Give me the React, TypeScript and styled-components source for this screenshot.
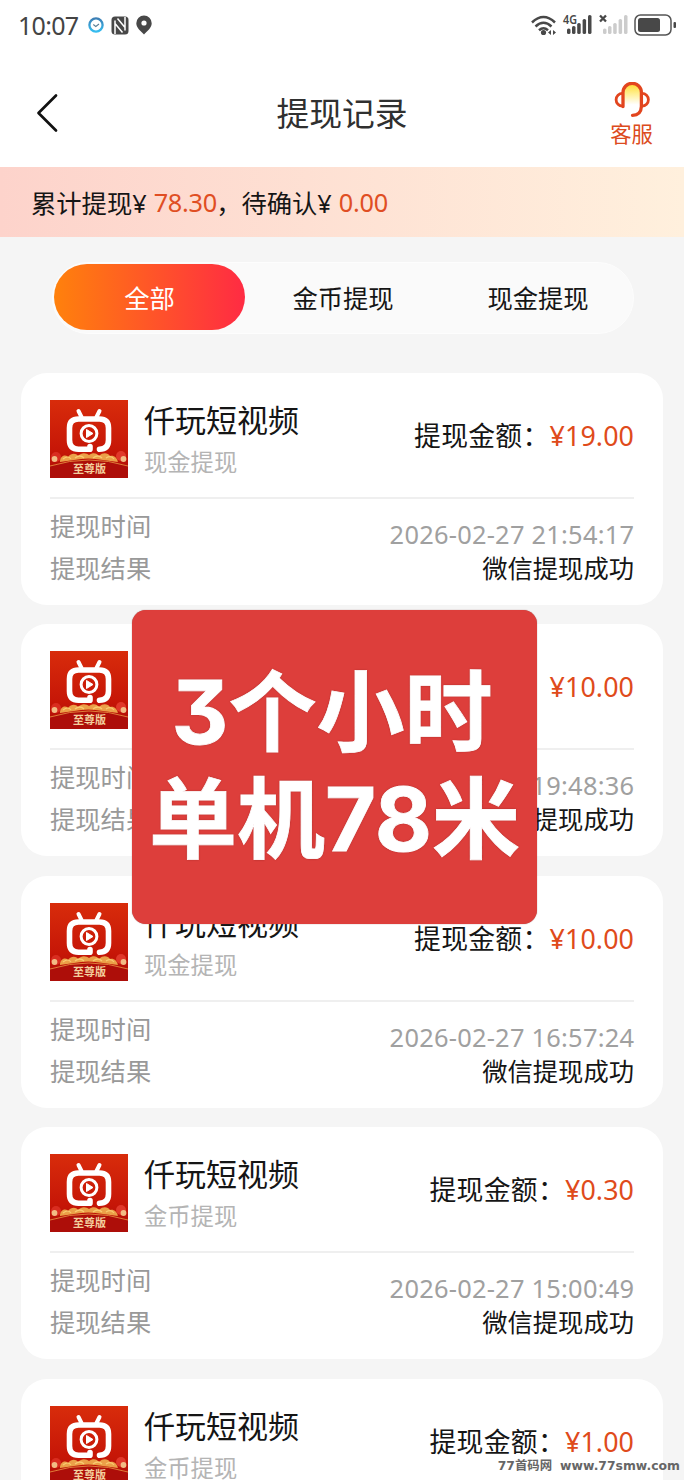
import React from 'react';
import styled, { createGlobalStyle } from 'styled-components';

const Global = createGlobalStyle`
  * { box-sizing: border-box; }
  html, body { margin: 0; padding: 0; background: #f5f5f5; overflow: hidden; }
  body { font-family: 'Noto Sans', 'Noto Sans CJK SC', sans-serif; color: #151515; }
`;

const Screen = styled.div`
  position: relative;
  width: 684px;
  height: 1480px;
  overflow: hidden;
  background: #f5f5f5;
  display: flex;
  flex-direction: column;
`;

const StatusBar = styled.div`
  flex: none;
  height: 50px;
  padding: 0 8px 0 18px;
  background: #fff;
  display: flex;
  align-items: center;
  justify-content: space-between;
`;

const StatusGroup = styled.div<{ $gap: number }>`
  display: flex;
  align-items: center;
  gap: ${p => p.$gap}px;
  svg { display: block; }
`;

const Clock = styled.span`
  font-size: 25px;
  line-height: 50px;
  width: 63px;
  letter-spacing: -0.7px;
  color: #444;
  white-space: nowrap;
`;

const Header = styled.header`
  flex: none;
  height: 117px;
  padding: 0 31px;
  background: #fff;
  display: grid;
  grid-template-columns: 90px 1fr 90px;
  align-items: center;
`;

const BackButton = styled.button`
  border: 0;
  padding: 0;
  margin: 9px 0 0 4px;
  background: none;
  display: flex;
`;

const Title = styled.h1`
  margin: 10px 0 0;
  font-size: 32.8px;
  line-height: 40px;
  font-weight: 400;
  text-align: center;
  color: #303030;
`;

const Support = styled.button`
  border: 0;
  padding: 0;
  margin-top: 13px;
  background: none;
  justify-self: end;
  display: flex;
  flex-direction: column;
  align-items: center;
  font: inherit;
  font-size: 21.4px;
  line-height: 29px;
  color: #dc4b20;
`;

const Summary = styled.div`
  flex: none;
  height: 70px;
  padding-left: 31px;
  background: linear-gradient(90deg, #fdd3cb, #fff0dd);
  display: flex;
  align-items: center;
  font-size: 25.3px;
  white-space: pre;
`;

const SummaryValue = styled.span<{ $width: number }>`
  width: ${p => p.$width}px;
  margin-left: 7px;
  letter-spacing: -0.3px;
  color: #e04e23;
`;

const Tabs = styled.nav`
  flex: none;
  width: 582px;
  height: 72px;
  margin: 24.5px 0 39.5px 52px;
  padding: 1px;
  border: 1px solid #fdfdfd;
  border-radius: 36px;
  background: #fafafa;
  display: grid;
  grid-template-columns: 191px 194px 194px;
  grid-template-rows: 66px;
  column-gap: 1px;
`;

const Tab = styled.button<{ $active?: boolean }>`
  border: 0;
  padding: 0;
  border-radius: 33px;
  font: inherit;
  font-size: 25.3px;
  color: ${p => (p.$active ? '#fff' : '#151515')};
  background: ${p => (p.$active ? 'linear-gradient(90deg, #ff810c, #ff2b43)' : 'none')};
`;

const List = styled.main`
  display: flex;
  flex-direction: column;
  gap: 19.4px;
  padding: 0 21px;
`;

const Card = styled.article`
  flex: none;
  height: 232px;
  padding: 27px 29px 0;
  border-radius: 26px;
  background: #fff;
`;

const CardTop = styled.div`
  display: flex;
  align-items: center;
  height: 99px;
  padding-bottom: 19px;
  border-bottom: 2px solid #efefef;
  svg { flex: none; display: block; }
`;

const Names = styled.div`
  flex: 1;
  margin: 4px 0 0 16px;
  display: flex;
  flex-direction: column;
`;

const AppName = styled.div`
  font-size: 31px;
  line-height: 42px;
`;

const Kind = styled.div`
  font-size: 23.3px;
  line-height: 42px;
  color: #b4b4b4;
`;

const Amount = styled.div`
  display: flex;
  font-size: 26.8px;
  line-height: 40px;
  margin-top: -6px;
  letter-spacing: 0.3px;
`;

const Price = styled.span`
  color: #df4b1b;
  letter-spacing: 0.1px;
`;

const Details = styled.div`
  display: flex;
  justify-content: space-between;
  font-size: 25.3px;
`;

const Labels = styled.div`
  padding-top: 6px;
  line-height: 42px;
  color: #999;
`;

const Values = styled.div`
  padding-top: 18px;
  line-height: 34px;
  text-align: right;
`;

const Time = styled.div`
  color: #a0a0a0;
  font-size: 25.4px;
  letter-spacing: 0.25px;
  margin-right: -0.25px;
`;

const Banner = styled.div`
  position: absolute;
  left: 132px;
  top: 610px;
  width: 405px;
  height: 313.5px;
  padding-top: 49px;
  border-radius: 14px;
  background: #dd3e3b;
  box-shadow: 0 0 1px #8d5553;
  color: #fff;
  font-family: Inter, 'Noto Sans CJK SC', sans-serif;
  font-feature-settings: 'cv09' 1;
  font-size: 88px;
  font-weight: 700;
  line-height: 107px;
  text-align: center;
  white-space: nowrap;
  text-shadow: 0 0 2px rgba(90, 20, 20, 0.6);
  -webkit-text-stroke: 0.8px #fff;
`;

const BannerLine = styled.div<{ $inset?: number }>`
  padding-right: ${p => p.$inset ?? 0}px;
`;

const Watermark = styled.div`
  position: absolute;
  right: 4px;
  bottom: 4px;
  display: flex;
  gap: 8px;
  font-family: 'DejaVu Sans', 'Noto Sans CJK SC', sans-serif;
  font-weight: 700;
  font-size: 12.4px;
  line-height: 20px;
  color: #666;
`;

const AppLogo = () => (
  <svg width="78" height="78" viewBox="0 0 78 78">
    <defs>
      <linearGradient id="logoBg" x1="0" y1="0" x2="0" y2="1">
        <stop offset="0" stopColor="#d82c0b" />
        <stop offset="0.65" stopColor="#c61607" />
        <stop offset="1" stopColor="#a90c07" />
      </linearGradient>
    </defs>
    <rect width="78" height="78" fill="url(#logoBg)" />
    <circle cx="71" cy="56" r="5" fill="#e0382a" />
    <circle cx="6" cy="57" r="5" fill="#d92d20" />
    <path d="M10 62c0-6 5-8 8-5 3-4 8-4 10-1 4-4 8-3 11-1 4-3 8-2 10 1 4-4 9-3 11 0 4-1 7 2 8 6l-15-2q-15-3-29 0z" fill="#eba048" />
    <path d="M13 59q5-4 8 0M25 58q5-4 9 0M43 58q5-4 9 0M56 58q5-3 8 1" fill="none" stroke="#f8cb72" strokeWidth="1.2" />
    <path d="M0 66Q39 54 78 66V78H0Z" fill="#ad0e09" />
    <path d="M0 66Q39 54 78 66" fill="none" stroke="#df7c39" strokeWidth="1" />
    <circle cx="4.500" cy="59" r="2.900" fill="#f2bc85" />
    <circle cx="73.500" cy="59" r="2.900" fill="#f2bc85" />
    <path d="M28.500 11l3 6M49.500 11l-3 6" stroke="#fff" strokeWidth="4" strokeLinecap="round" />
    <path
      d="M40 46.500v2.700H28.500Q19.500 49.200 19.500 40V28Q19.500 19 28.500 19H49.500Q58.500 19 58.500 28V40Q58.500 49.200 49.500 49.200"
      fill="none" stroke="#fff" strokeWidth="5.600" strokeLinecap="round" strokeLinejoin="round"
    />
    <circle cx="39" cy="33.500" r="7.900" fill="none" stroke="#fff" strokeWidth="3" />
    <path d="M36.500 29.500v8l6.500-4z" fill="#fff" stroke="#fff" strokeWidth="1" strokeLinejoin="round" />
    <text x="39.500" y="73" textAnchor="middle" fontSize="11" fontWeight="700" fill="#f3cf9d" fontFamily="'Noto Sans CJK SC', sans-serif">至尊版</text>
  </svg>
);

const Bars = ({ color }: { color: string }) => (
  <g fill={color}>
    <rect x="4" y="14.500" width="3.500" height="5.500" rx="1.600" />
    <rect x="9" y="12" width="3.500" height="8" rx="1.600" />
    <rect x="14.200" y="9" width="3.500" height="11" rx="1.600" />
    <rect x="19.600" y="5" width="3.500" height="15" rx="1.600" />
    <rect x="25" y="1" width="3.500" height="19" rx="1.600" />
  </g>
);

const records = [
  { kind: '现金提现', amount: '19.00', time: '2026-02-27 21:54:17' },
  { kind: '现金提现', amount: '10.00', time: '2026-02-27 19:48:36' },
  { kind: '现金提现', amount: '10.00', time: '2026-02-27 16:57:24' },
  { kind: '金币提现', amount: '0.30', time: '2026-02-27 15:00:49' },
  { kind: '金币提现', amount: '1.00', time: '' },
];

export default function App() {
  return (
    <>
      <Global />
      <Screen>
        <StatusBar>
          <StatusGroup $gap={7}>
            <Clock>10:07</Clock>
            <svg width="16" height="16" viewBox="0 0 16 16">
              <defs>
                <linearGradient id="ring" x1="0" y1="0" x2="0" y2="1">
                  <stop offset="0" stopColor="#3d7fb5" />
                  <stop offset="1" stopColor="#35bdf0" />
                </linearGradient>
              </defs>
              <circle cx="8" cy="8" r="6.600" fill="none" stroke="url(#ring)" strokeWidth="2.300" />
              <path d="M5.300 7.500l2.500 2L11 7" fill="none" stroke="#5b7f96" strokeWidth="1.100" />
            </svg>
            <svg width="18" height="19" viewBox="0 0 18 19">
              <rect x="0.500" y="0.500" width="17" height="18" rx="3.500" fill="#484848" />
              <path d="M4 18V4.500M14 1V14.500M6.500 2.500L14 11.500M4 7.500L11.500 16.500" fill="none" stroke="#fff" strokeWidth="1.500" />
            </svg>
            <svg width="16" height="20" viewBox="0 0 16 20">
              <path d="M8 0.500a7.700 7.700 0 0 0-7.700 7.700C.3 13 5 16 8 19.500 11 16 15.700 13 15.700 8.200A7.700 7.700 0 0 0 8 .5z" fill="#484848" />
              <circle cx="8" cy="8" r="2.600" fill="#fff" />
            </svg>
          </StatusGroup>
          <StatusGroup $gap={6}>
            <svg width="26" height="21" viewBox="0 0 26 21">
              <g fill="none" stroke="#484848" strokeWidth="2.500">
                <path d="M1 7.500q11.500-11 23 0" />
                <path d="M4.500 11.500q8-7.500 16 0" />
                <path d="M8 15.200q4.500-4 9 0" />
              </g>
              <circle cx="12.500" cy="17.500" r="2.600" fill="#484848" />
              <path d="M20 15v5l-3-2.500zM22 15v5l3-2.500z" fill="#484848" />
            </svg>
            <svg width="30" height="22" viewBox="0 0 30 22" overflow="visible">
              <text x="0" y="10" fontSize="12.500" fontWeight="600" textLength="14" lengthAdjust="spacingAndGlyphs" fill="#484848" fontFamily="'Noto Sans', sans-serif">4G</text>
              <Bars color="#484848" />
            </svg>
            <svg width="29" height="22" viewBox="0 0 29 22">
              <path d="M1 1.500l6 6M7 1.500l-6 6" stroke="#484848" strokeWidth="2.300" />
              <Bars color="#ccc" />
            </svg>
            <svg width="42" height="22" viewBox="0 0 42 22">
              <rect x="1" y="1" width="36" height="20" rx="5.500" fill="none" stroke="#555" strokeWidth="1.500" />
              <rect x="4" y="4" width="22" height="14" rx="2.500" fill="#484848" />
              <rect x="39.500" y="8" width="2.500" height="6" rx="1" fill="#484848" />
            </svg>
          </StatusGroup>
        </StatusBar>

        <Header>
          <BackButton aria-label="返回">
            <svg width="24" height="40" viewBox="0 0 24 40">
              <path d="M21 2.500L3.500 20 21 37.500" fill="none" stroke="#111" strokeWidth="2.700" strokeLinecap="round" strokeLinejoin="round" />
            </svg>
          </BackButton>
          <Title>提现记录</Title>
          <Support>
            <svg width="36" height="37" viewBox="0 0 36 37">
              <defs>
                <linearGradient id="face" x1="0" y1="0" x2="0" y2="1">
                  <stop offset="0" stopColor="#ffd92e" />
                  <stop offset="0.400" stopColor="#ffee8a" />
                  <stop offset="0.900" stopColor="#fff" />
                </linearGradient>
              </defs>
              <path d="M9 25V11a9 9 0 0 1 18.500 0V25z" fill="url(#face)" />
              <path d="M9 24.500V10.500a9.200 9.200 0 0 1 18.400 0V24.500Q27 33.300 18.500 33.300" fill="none" stroke="#e2451e" strokeWidth="3.300" strokeLinecap="round" />
              <path d="M8.500 11.300a6.400 6.400 0 0 0 0 12.800M28 11.300a6.400 6.400 0 0 1 0 12.800" fill="none" stroke="#e2451e" strokeWidth="2.800" />
            </svg>
            客服
          </Support>
        </Header>

        <Summary>
          累计提现¥<SummaryValue $width={62.5}>78.30</SummaryValue>，待确认¥<SummaryValue $width={50}>0.00</SummaryValue>
        </Summary>

        <Tabs>
          <Tab $active>全部</Tab>
          <Tab>金币提现</Tab>
          <Tab>现金提现</Tab>
        </Tabs>

        <List>
          {records.map((r, i) => (
            <Card key={i}>
              <CardTop>
                <AppLogo />
                <Names>
                  <AppName>仟玩短视频</AppName>
                  <Kind>{r.kind}</Kind>
                </Names>
                <Amount>提现金额：<Price>¥{r.amount}</Price></Amount>
              </CardTop>
              {r.time && (
                <Details>
                  <Labels>
                    <div>提现时间</div>
                    <div>提现结果</div>
                  </Labels>
                  <Values>
                    <Time>{r.time}</Time>
                    <div>微信提现成功</div>
                  </Values>
                </Details>
              )}
            </Card>
          ))}
        </List>

        <Banner>
          <BannerLine $inset={5}>3个小时</BannerLine>
          <BannerLine>单机78米</BannerLine>
        </Banner>
        <Watermark>
          <span>77首码网</span>
          <span>www.77smw.com</span>
        </Watermark>
      </Screen>
    </>
  );
}
